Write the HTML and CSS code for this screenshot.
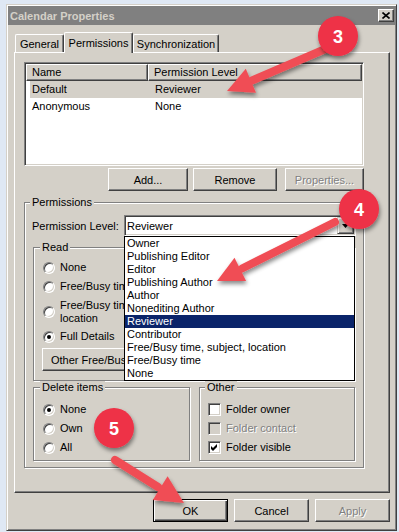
FILE: index.html
```html
<!DOCTYPE html>
<html>
<head>
  <title>Calendar Properties</title>
  <link rel="stylesheet" href="styles.css">
</head>
<body>
  <div class="dialog">
    <div class="titlebar">
      <span class="title">Calendar Properties</span>
      <span class="close-btn">
        <svg width="8" height="7" viewBox="0 0 8 7"><path d="M0.5 0.5 L7.5 6.5 M7.5 0.5 L0.5 6.5" stroke="#000" stroke-width="1.6" fill="none"/></svg>
      </span>
    </div>

    <div class="tabs">
      <div class="tab tab-general">General</div>
      <div class="tab tab-permissions tab-active">Permissions</div>
      <div class="tab tab-sync">Synchronization</div>
    </div>

    <div class="tab-page">
      <div class="page-content">
        <div class="listview">
          <div class="lv-header">
            <div class="lv-col lv-col-name">Name</div>
            <div class="lv-col lv-col-level">Permission Level</div>
          </div>
          <div class="lv-row lv-row-selected">
            <span class="lv-name">Default</span>
            <span class="lv-level">Reviewer</span>
          </div>
          <div class="lv-row">
            <span class="lv-name">Anonymous</span>
            <span class="lv-level">None</span>
          </div>
        </div>

        <div class="list-buttons">
          <button class="btn btn-add">Add...</button>
          <button class="btn btn-remove">Remove</button>
          <button class="btn btn-props btn-disabled">Properties...</button>
        </div>

        <fieldset class="group group-permissions">
          <legend>Permissions</legend>

          <div class="level-row">
            <span class="level-label">Permission Level:</span>
            <div class="combo">
              <span class="combo-text">Reviewer</span>
              <span class="combo-arrow">
                <svg width="7" height="4" viewBox="0 0 7 4"><path d="M0 0 H7 L3.5 4 Z" fill="#000"/></svg>
              </span>
              <div class="dropdown">
                <div class="dd-item">Owner</div>
                <div class="dd-item">Publishing Editor</div>
                <div class="dd-item">Editor</div>
                <div class="dd-item">Publishing Author</div>
                <div class="dd-item">Author</div>
                <div class="dd-item">Nonediting Author</div>
                <div class="dd-item dd-item-selected">Reviewer</div>
                <div class="dd-item">Contributor</div>
                <div class="dd-item">Free/Busy time, subject, location</div>
                <div class="dd-item">Free/Busy time</div>
                <div class="dd-item">None</div>
              </div>
            </div>
          </div>

          <!-- the open list covers the right part of this group -->
          <fieldset class="group group-read">
            <legend>Read</legend>
            <div class="option"><span class="radio"></span>None</div>
            <div class="option"><span class="radio"></span>Free/Busy time</div>
            <div class="option option-2line"><span class="radio"></span><span>Free/Busy time, subject,<br>location</span></div>
            <div class="option"><span class="radio radio-checked"></span>Full Details</div>
            <button class="btn btn-other">Other Free/Busy...</button>
          </fieldset>

          <div class="group-row">
            <fieldset class="group group-delete">
              <legend>Delete items</legend>
              <div class="option"><span class="radio radio-checked"></span>None</div>
              <div class="option"><span class="radio"></span>Own</div>
              <div class="option"><span class="radio"></span>All</div>
            </fieldset>
            <fieldset class="group group-other">
              <legend>Other</legend>
              <div class="option"><span class="checkbox"></span>Folder owner</div>
              <div class="option option-disabled"><span class="checkbox checkbox-disabled"></span>Folder contact</div>
              <div class="option">
                <span class="checkbox">
                  <svg width="7" height="7" viewBox="0 0 7 7"><polygon points="0,2 2,4 6,0 6,3 2,7 0,5" fill="#000"/></svg>
                </span>Folder visible
              </div>
            </fieldset>
          </div>
        </fieldset>
      </div>
    </div>

    <div class="dialog-buttons">
      <button class="btn btn-dialog btn-default">OK</button>
      <button class="btn btn-dialog">Cancel</button>
      <button class="btn btn-dialog btn-disabled">Apply</button>
    </div>
  </div>

  <!-- callouts drawn over the screenshot -->
  <svg class="callouts" width="399" height="532" viewBox="0 0 399 532">
    <defs>
      <filter id="drop" x="-30%" y="-30%" width="160%" height="170%">
        <feDropShadow dx="1" dy="3" stdDeviation="2" flood-color="#000" flood-opacity="0.45"/>
      </filter>
    </defs>
    <g filter="url(#drop)" fill="#f04e55" stroke="#f04e55">
      <line x1="330" y1="47" x2="252" y2="80.5" stroke-width="8" stroke-linecap="round"/>
      <polygon points="227,91 256,92.8 245.8,68.8" stroke="none"/>
      <line x1="335" y1="222" x2="242" y2="268.5" stroke-width="8" stroke-linecap="round"/>
      <polygon points="217,281 246.1,281 234.5,257.8" stroke="none"/>
      <line x1="115" y1="460" x2="158" y2="487" stroke-width="8" stroke-linecap="round"/>
      <polygon points="184,503 152.8,500.1 167.6,476.3" stroke="none"/>
    </g>
    <g filter="url(#drop)" fill="#ee3046">
      <circle cx="338" cy="36" r="20"/>
      <circle cx="359" cy="209" r="20"/>
      <circle cx="114" cy="428" r="20"/>
    </g>
    <g class="callout-num" fill="#fff">
      <text x="338" y="43">3</text>
      <text x="359" y="216">4</text>
      <text x="114" y="435">5</text>
    </g>
  </svg>
</body>
</html>
```

FILE: styles.css
```css
body {
  margin: 0;
  padding: 4px 0 0 6px;
  width: 399px;
  height: 532px;
  box-sizing: border-box;
  overflow: hidden;
  background: #dfe8f4;
  font-family: "Liberation Sans", Arial, sans-serif;
  font-size: 11px;
  color: #000;
}

.dialog {
  box-sizing: border-box;
  width: 391px;
  height: 527px;
  padding: 1px;
  background: #d4d0c8;
  border: 1px solid;
  border-color: #d4d0c8 #404040 #404040 #d4d0c8;
  box-shadow: inset 1px 1px #fff, inset -1px -1px #808080;
}

.titlebar {
  height: 19px;
  display: flex;
  align-items: center;
  justify-content: space-between;
  padding: 0 1px 0 2px;
  background: #808080;
  color: #d4d0c8;
  font-weight: bold;
}

.close-btn {
  box-sizing: border-box;
  width: 16px;
  height: 13px;
  display: flex;
  align-items: center;
  justify-content: center;
  background: #d4d0c8;
  border: 1px solid;
  border-color: #fff #404040 #404040 #fff;
  box-shadow: inset -1px -1px #808080;
}

/* tabs */
.tabs {
  display: flex;
  align-items: flex-end;
  height: 20px;
  margin-top: 7px;
  padding-left: 7px;
}

.tab {
  box-sizing: border-box;
  height: 18px;
  padding-top: 3px;
  line-height: 13px;
  text-align: center;
  border: 1px solid;
  border-bottom: 0;
  border-color: #fff #404040 #404040 #fff;
  border-radius: 2px 2px 0 0;
  box-shadow: inset -1px 0 #808080;
}

.tab-general { width: 49px; }
.tab-permissions { width: 69px; }
.tab-sync { width: 86px; }

.tab-active {
  height: 21px;
  margin-bottom: -1px;
  padding-top: 4px;
  position: relative;
  z-index: 1;
  background: #d4d0c8;
}

.tab-page {
  box-sizing: border-box;
  height: 441px;
  margin: 0 5px 0 6px;
  padding: 9px 0 0 9px;
  border: 1px solid;
  border-color: #fff #404040 #404040 #fff;
  box-shadow: inset -1px -1px #808080;
}

.page-content {
  width: 340px;
}

/* list view */
.listview {
  box-sizing: border-box;
  height: 104px;
  padding: 1px;
  background: #fff;
  border: 1px solid;
  border-color: #808080 #fff #fff #808080;
  box-shadow: inset 1px 1px #404040, inset -1px -1px #d4d0c8;
}

.lv-header {
  display: flex;
  height: 17px;
}

.lv-col {
  box-sizing: border-box;
  height: 17px;
  line-height: 15px;
  padding-left: 5px;
  background: #d4d0c8;
  border: 1px solid;
  border-color: #fff #404040 #404040 #fff;
  box-shadow: inset -1px -1px #808080;
}

.lv-col-name { width: 122px; }
.lv-col-level { flex: 1; }

.lv-row {
  display: flex;
  height: 17px;
  line-height: 17px;
  margin-left: 4px;
}

.lv-row-selected {
  background: #d4d0c8;
}

.lv-name {
  box-sizing: border-box;
  width: 118px;
  padding-left: 2px;
}

.lv-level {
  padding-left: 7px;
}

/* buttons */
.btn {
  box-sizing: border-box;
  height: 23px;
  padding: 0;
  display: flex;
  align-items: center;
  justify-content: center;
  font: inherit;
  color: #000;
  background: #d4d0c8;
  border: 1px solid;
  border-color: #fff #404040 #404040 #fff;
  box-shadow: inset -1px -1px #808080;
}

.btn-disabled {
  color: #808080;
  text-shadow: 1px 1px #fff;
}

.list-buttons {
  display: flex;
  justify-content: flex-end;
  margin-top: 2px;
}

.btn-add { width: 80px; margin-right: 5px; }
.btn-remove { width: 84px; margin-right: 8px; }
.btn-props { width: 79px; }

/* group boxes */
.group {
  box-sizing: border-box;
  min-width: 0;
  margin: 0;
  padding: 0 8px;
  border: 1px solid #808080;
  box-shadow: inset 1px 1px #fff, 1px 1px #fff;
}

.group legend {
  padding: 0 2px;
  margin-left: -3px;
  line-height: 13px;
  background: #d4d0c8;
}

.group-permissions {
  width: 340px;
  margin-top: 5px;
  padding: 6px 8px 6px 8px;
}

.level-row {
  display: flex;
  align-items: center;
  height: 21px;
  margin: 0 -1px;
}

.level-label {
  width: 92px;
  flex-shrink: 0;
}

.combo {
  position: relative;
  box-sizing: border-box;
  width: 232px;
  height: 21px;
  padding: 1px 1px 1px 2px;
  display: flex;
  align-items: center;
  justify-content: space-between;
  background: #fff;
  border: 1px solid;
  border-color: #808080 #fff #fff #808080;
  box-shadow: inset 1px 1px #404040, inset -1px -1px #d4d0c8;
}

.combo-arrow {
  box-sizing: border-box;
  width: 17px;
  height: 17px;
  display: flex;
  align-items: center;
  justify-content: center;
  background: #d4d0c8;
  border: 1px solid;
  border-color: #d4d0c8 #404040 #404040 #d4d0c8;
  box-shadow: inset 1px 1px #fff, inset -1px -1px #808080;
}

.dropdown {
  position: absolute;
  top: 20px;
  left: -1px;
  box-sizing: border-box;
  width: 231px;
  height: 145px;
  background: #fff;
  border: 1px solid #000;
}

.dd-item {
  height: 13px;
  line-height: 13px;
  padding-left: 2px;
  white-space: nowrap;
}

.dd-item-selected {
  background: #0a246a;
  color: #fff;
}

.group-read {
  width: 322px;
  margin-top: 5px;
  padding: 4px 8px 9px 9px;
}

.option {
  display: flex;
  align-items: center;
  height: 19px;
  line-height: 13px;
}

.option-2line {
  box-sizing: border-box;
  height: 31px;
  padding: 3px 0 2px;
}

.option-disabled {
  color: #808080;
  text-shadow: 1px 1px #fff;
}

.radio {
  box-sizing: border-box;
  width: 12px;
  height: 12px;
  margin-right: 5px;
  flex-shrink: 0;
  display: flex;
  align-items: center;
  justify-content: center;
  border-radius: 50%;
  background: #fff;
  border: 1px solid;
  border-color: #808080 #fff #fff #808080;
  box-shadow: inset 1px 1px #404040, inset -1px -1px #d4d0c8;
}

.radio-checked::after {
  content: "";
  width: 4px;
  height: 4px;
  border-radius: 50%;
  background: #000;
}

.checkbox {
  box-sizing: border-box;
  width: 13px;
  height: 13px;
  margin-right: 5px;
  flex-shrink: 0;
  display: flex;
  align-items: center;
  justify-content: center;
  background: #fff;
  border: 1px solid;
  border-color: #808080 #fff #fff #808080;
  box-shadow: inset 1px 1px #404040, inset -1px -1px #d4d0c8;
}

.checkbox-disabled {
  background: #d4d0c8;
}

.btn-other {
  width: 130px;
  margin: 2px 0 0 -1px;
  justify-content: flex-start;
  padding-left: 8px;
}

.group-row {
  display: flex;
  gap: 9px;
}

.group-delete {
  width: 157px;
  padding: 6px 8px 3px 9px;
}

.group-other {
  width: 156px;
  padding: 6px 8px 3px 8px;
}

/* dialog buttons */
.dialog-buttons {
  display: flex;
  justify-content: flex-end;
  gap: 6px;
  margin: 6px 5px 0 0;
}

.btn-dialog {
  width: 75px;
}

.btn-default {
  border-color: #000;
  box-shadow: inset 1px 1px #fff, inset -1px -1px #404040, inset -2px -2px #808080;
}

/* callouts */
.callouts {
  position: absolute;
  top: 0;
  left: 0;
  pointer-events: none;
}

.callout-num text {
  font-family: "Liberation Sans", Arial, sans-serif;
  font-weight: bold;
  font-size: 18px;
  text-anchor: middle;
}
```
